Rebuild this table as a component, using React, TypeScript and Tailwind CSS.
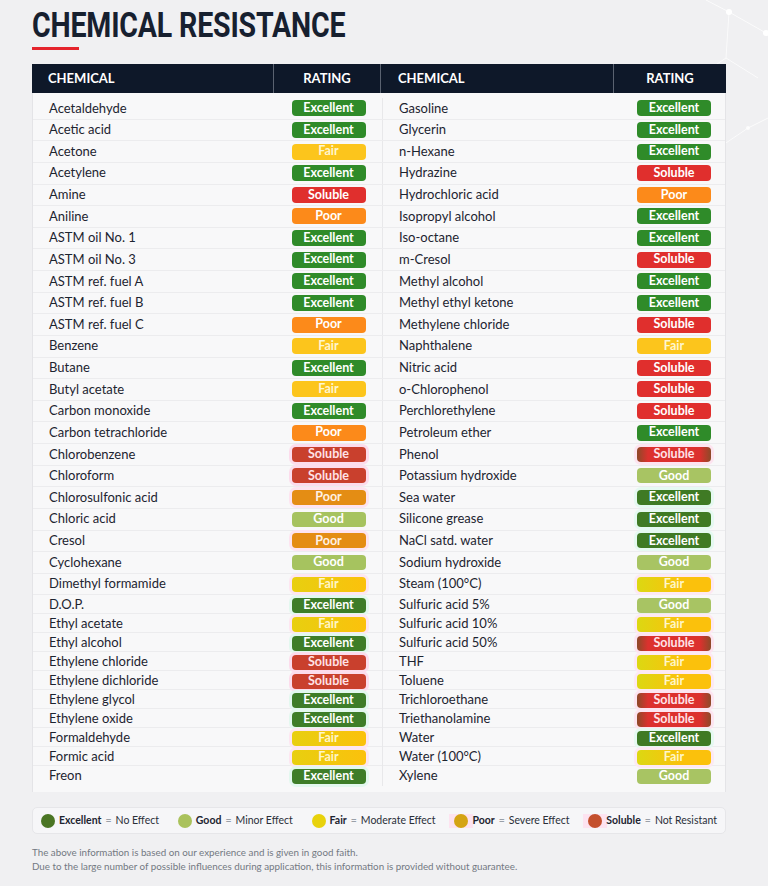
import React from "react";

type R = "E" | "G" | "F" | "P" | "S";

const left: [string, R][] = [
  ["Acetaldehyde", "E"], ["Acetic acid", "E"], ["Acetone", "F"], ["Acetylene", "E"], ["Amine", "S"],
  ["Aniline", "P"], ["ASTM oil No. 1", "E"], ["ASTM oil No. 3", "E"], ["ASTM ref. fuel A", "E"],
  ["ASTM ref. fuel B", "E"], ["ASTM ref. fuel C", "P"], ["Benzene", "F"], ["Butane", "E"],
  ["Butyl acetate", "F"], ["Carbon monoxide", "E"], ["Carbon tetrachloride", "P"], ["Chlorobenzene", "S"],
  ["Chloroform", "S"], ["Chlorosulfonic acid", "P"], ["Chloric acid", "G"], ["Cresol", "P"],
  ["Cyclohexane", "G"], ["Dimethyl formamide", "F"], ["D.O.P.", "E"], ["Ethyl acetate", "F"],
  ["Ethyl alcohol", "E"], ["Ethylene chloride", "S"], ["Ethylene dichloride", "S"], ["Ethylene glycol", "E"],
  ["Ethylene oxide", "E"], ["Formaldehyde", "F"], ["Formic acid", "F"], ["Freon", "E"],
];

const right: [string, R][] = [
  ["Gasoline", "E"], ["Glycerin", "E"], ["n-Hexane", "E"], ["Hydrazine", "S"], ["Hydrochloric acid", "P"],
  ["Isopropyl alcohol", "E"], ["Iso-octane", "E"], ["m-Cresol", "S"], ["Methyl alcohol", "E"],
  ["Methyl ethyl ketone", "E"], ["Methylene chloride", "S"], ["Naphthalene", "F"], ["Nitric acid", "S"],
  ["o-Chlorophenol", "S"], ["Perchlorethylene", "S"], ["Petroleum ether", "E"], ["Phenol", "S"],
  ["Potassium hydroxide", "G"], ["Sea water", "E"], ["Silicone grease", "E"], ["NaCl satd. water", "E"],
  ["Sodium hydroxide", "G"], ["Steam (100°C)", "F"], ["Sulfuric acid 5%", "G"], ["Sulfuric acid 10%", "F"],
  ["Sulfuric acid 50%", "S"], ["THF", "F"], ["Toluene", "F"], ["Trichloroethane", "S"],
  ["Triethanolamine", "S"], ["Water", "E"], ["Water (100°C)", "F"], ["Xylene", "G"],
];

const label: Record<R, string> = { E: "Excellent", G: "Good", F: "Fair", P: "Poor", S: "Soluble" };

const bright: Record<R, string> = {
  E: "bg-[#2f8b29] text-white",
  G: "bg-[#a6c35f] text-white",
  F: "bg-[#fcc51c] text-[#fff6cf]",
  P: "bg-[#fc8a1a] text-white",
  S: "bg-[#e02f2d] text-white",
};

const mutedLeft: Record<R, string> = {
  E: "bg-[#3e7d28] text-white shadow-[0_0_0_3px_#e3f8ef]",
  G: "bg-[#a6c35f] text-white",
  F: "bg-[linear-gradient(90deg,#e8cf10,#fbc10c)] text-[#fff6c8] shadow-[0_0_0_3px_#fde6f1]",
  P: "bg-[#e48d14] text-[#fff1e4] shadow-[0_0_0_3px_#fde4f0]",
  S: "bg-[#c9402d] text-[#ffe2e6] shadow-[0_0_0_3px_#fcdcec]",
};

const mutedRight: Record<R, string> = {
  E: "bg-[#3f7a24] text-white shadow-[0_0_0_3px_#e5f9f1]",
  G: "bg-[#a8c463] text-white",
  F: "bg-[linear-gradient(90deg,#dcd812,#fbc10c_60%)] text-[#fff6c8] shadow-[0_0_0_3px_#fde9f3]",
  P: "bg-[#e48d14] text-white shadow-[0_0_0_3px_#fde4f0]",
  S: "bg-[linear-gradient(90deg,#8d4a28,#dc312e_15%,#dc312e_85%,#8d4a28)] text-[#ffe3e8] shadow-[0_0_0_3px_#fde4f0]",
};

function Badge({ r, muted, side }: { r: R; muted: boolean; side: "l" | "r" }) {
  const cls = muted ? (side === "l" ? mutedLeft[r] : mutedRight[r]) : bright[r];
  return (
    <div
      className={`${cls} ${muted ? "h-[15px]" : "h-[16px]"} w-[74px] rounded-[4px] flex items-center justify-center text-[12.5px] font-bold leading-none`}
    >
      {label[r]}
    </div>
  );
}

function Dot({ color, glow }: { color: string; glow?: boolean }) {
  return (
    <span className={`flex items-center justify-center ${glow ? "bg-[#fde3f0] px-[5px] -mx-[5px]" : ""}`}>
      <span className={`${color} w-[14px] h-[14px] rounded-full inline-block`} />
    </span>
  );
}

export default function App() {
  return (
    <div
      className="relative w-[768px] h-[886px] overflow-hidden bg-[#f0f0f2]"
      style={{ fontFamily: "Lato, 'Open Sans', sans-serif" }}
    >
      <svg className="absolute right-0 top-0" width="170" height="200" viewBox="0 0 170 200" fill="none">
        <g stroke="#ffffff" strokeWidth="1" opacity="0.75">
          <path d="M131 12 L168 33" />
          <path d="M131 12 L108 0" />
          <path d="M131 12 L128 58" />
          <path d="M128 58 L95 80 L92 125 L125 145 L150 128" />
          <path d="M128 58 L160 78" />
          <path d="M150 128 L170 118" />
          <path d="M125 145 L122 190" />
        </g>
        <circle cx="131" cy="12" r="3" fill="#ffffff" />
        <circle cx="168" cy="33" r="3" fill="#ffffff" />
        <circle cx="150" cy="128" r="2" fill="#ffffff" opacity="0.8" />
      </svg>

      <div className="relative px-[32px] pt-[6px]">
        <h1
          className="inline-block origin-left scale-x-[0.815] text-[35px] font-bold leading-[40px] text-[#17202f] tracking-[-0.2px]"
          style={{ fontFamily: "Roboto, 'Liberation Sans', sans-serif" }}
        >
          CHEMICAL RESISTANCE
        </h1>
        <div className="mt-[1px] w-[47px] h-[3px] bg-[#e5242c]" />

        <div className="mt-[14px] w-[694px]">
          <div className="grid grid-cols-[242px_107px_233px_112px] h-[29px] bg-[#0e1829] text-white text-[13px] font-bold">
            <div className="flex items-center pl-[16px] border-r border-[#5a6270]">CHEMICAL</div>
            <div className="flex items-center justify-center border-r border-[#5a6270]">RATING</div>
            <div className="flex items-center pl-[17px] border-r border-[#5a6270]">CHEMICAL</div>
            <div className="flex items-center justify-center">RATING</div>
          </div>
          <div className="bg-[#f8f8f9] border-l border-r border-[#e4e4e7] pt-[5px] pb-[7px]">
            {left.map((l, i) => {
              const rr = right[i];
              const muted = i >= 16;
              const h = i < 23 ? "h-[21.64px]" : "h-[19px]";
              return (
                <div
                  key={i}
                  className={`grid grid-cols-[242px_107px_233px_110px] ${h} ${i < 32 ? "border-b border-[#ececee]" : ""} text-[13px] text-[#1d2430]`}
                >
                  <div className="flex items-center pl-[16px]">{l[0]}</div>
                  <div className="flex items-center justify-center">
                    <Badge r={l[1]} muted={muted} side="l" />
                  </div>
                  <div className="flex items-center pl-[16px] border-l border-[#e8e8ea]">{rr[0]}</div>
                  <div className="flex items-center justify-end pr-[14px]">
                    <Badge r={rr[1]} muted={muted} side="r" />
                  </div>
                </div>
              );
            })}
          </div>
        </div>

        <div className="mt-[15px] w-[694px] h-[27px] rounded-[5px] border border-[#e6e6e9] bg-[#f6f6f8] flex items-center justify-between px-[8px] text-[10.5px] text-[#2a2f38]">
          <div className="flex items-center gap-[4px]">
            <Dot color="bg-[#4a7524]" />
            <span className="font-bold text-[#1d2430]">Excellent</span>
            <span className="text-[#9aa0a8]">=</span>
            <span>No Effect</span>
          </div>
          <div className="flex items-center gap-[4px]">
            <Dot color="bg-[#aac25c]" />
            <span className="font-bold text-[#1d2430]">Good</span>
            <span className="text-[#9aa0a8]">=</span>
            <span>Minor Effect</span>
          </div>
          <div className="flex items-center gap-[4px]">
            <Dot color="bg-[#e8d20c]" />
            <span className="font-bold text-[#1d2430]">Fair</span>
            <span className="text-[#9aa0a8]">=</span>
            <span>Moderate Effect</span>
          </div>
          <div className="flex items-center gap-[4px]">
            <Dot color="bg-[#d4a414]" glow />
            <span className="font-bold text-[#1d2430]">Poor</span>
            <span className="text-[#9aa0a8]">=</span>
            <span>Severe Effect</span>
          </div>
          <div className="flex items-center gap-[4px]">
            <Dot color="bg-[#c4502d]" glow />
            <span className="font-bold text-[#1d2430]">Soluble</span>
            <span className="text-[#9aa0a8]">=</span>
            <span>Not Resistant</span>
          </div>
        </div>

        <div className="mt-[11px] text-[9.8px] leading-[14px] text-[#737982]">
          <p>The above information is based on our experience and is given in good faith.</p>
          <p>Due to the large number of possible influences during application, this information is provided without guarantee.</p>
        </div>
      </div>
    </div>
  );
}
